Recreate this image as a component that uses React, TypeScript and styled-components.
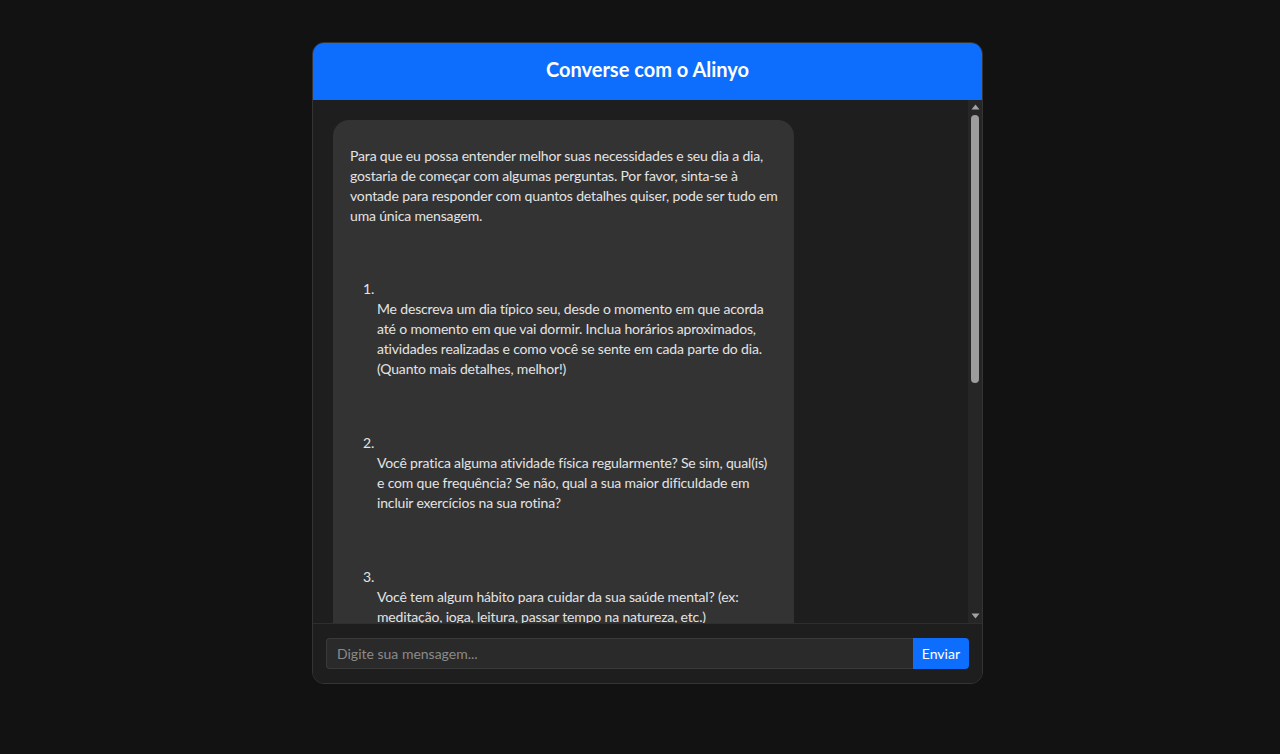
import styled, { createGlobalStyle } from "styled-components";

const GlobalStyle = createGlobalStyle`
  html, body {
    margin: 0;
    background-color: #121212;
    font-family: Lato, "Liberation Sans", sans-serif;
  }
  * {
    box-sizing: border-box;
  }
`;

const Page = styled.div`
  min-height: 754px;
  display: flex;
  justify-content: center;
  align-items: flex-start;
  padding: 42px 0 0 15px;
`;

const ChatBox = styled.div`
  width: 671px;
  height: 642px;
  display: flex;
  flex-direction: column;
  background-color: #1e1e1e;
  border: 1px solid #343434;
  border-radius: 12px;
  overflow: hidden;
`;

const Header = styled.header`
  background-color: #0d6efd;
  color: #fff;
  text-align: center;
  padding: 14px 16px 18px;
  font-size: 20px;
  line-height: 25px;
  font-weight: 700;
`;

const Body = styled.div`
  flex: 1;
  min-height: 0;
  display: flex;
`;

const Messages = styled.div`
  flex: 1;
  overflow-y: auto;
  scrollbar-width: none;
  padding: 20px;
  display: flex;
  flex-direction: column;
  gap: 14px;

  &::-webkit-scrollbar {
    display: none;
  }
`;

const ScrollRail = styled.div`
  width: 14px;
  display: flex;
  flex-direction: column;
  align-items: center;
  background-color: #262626;
`;

const RailButton = styled.div`
  height: 14px;
  width: 14px;
  display: flex;
  align-items: center;
  justify-content: center;
`;

const Thumb = styled.div`
  width: 8px;
  margin-top: 1px;
  border-radius: 4px;
  background-color: #9d9d9d;
`;

const RailSpacer = styled.div`
  flex: 1;
`;

const Bubble = styled.div<{ $user?: boolean }>`
  align-self: ${(p) => (p.$user ? "flex-end" : "flex-start")};
  max-width: 75%;
  background-color: ${(p) => (p.$user ? "#0d6efd" : "#333333")};
  color: #e3e3e3;
  border-radius: 16px;
  padding: 12px 14px 10px 17px;
  font-size: 14px;
  line-height: 20px;
  letter-spacing: -0.16px;
`;

const Paragraph = styled.p`
  margin: 14px 0;
`;

const List = styled.ol`
  list-style: none;
  margin: 53px 0 40px;
  padding: 0 3px 0 27px;
  display: flex;
  flex-direction: column;
  gap: 54px;
`;

const Item = styled.li`
  margin: 0;
`;

const Number = styled.div`
  margin-left: -14px;
`;

const Composer = styled.form`
  display: flex;
  padding: 14px 13px;
  border-top: 1px solid #2e2e2e;
  background-color: #1e1e1e;
`;

const Input = styled.input`
  flex: 1;
  height: 31px;
  padding: 0 10px;
  background-color: #2a2a2a;
  border: 1px solid #3a3a3a;
  border-right: none;
  border-radius: 4px 0 0 4px;
  color: #e3e3e3;
  font-family: inherit;
  font-size: 14px;
  outline: none;

  &::placeholder {
    color: #8a8a8a;
  }
`;

const SendButton = styled.button`
  height: 31px;
  padding: 0 9px;
  background-color: #0d6efd;
  color: #fff;
  border: none;
  border-radius: 0 4px 4px 0;
  font-family: inherit;
  font-size: 14px;
  cursor: pointer;
`;

const Arrow = ({ up }: { up?: boolean }) => (
  <svg width="9" height="6" viewBox="0 0 9 6">
    <polygon
      points={up ? "0.5,5.5 4.5,0.5 8.5,5.5" : "0.5,0.5 4.5,5.5 8.5,0.5"}
      fill="#a3a3a3"
    />
  </svg>
);

const questions = [
  "Me descreva um dia típico seu, desde o momento em que acorda até o momento em que vai dormir. Inclua horários aproximados, atividades realizadas e como você se sente em cada parte do dia. (Quanto mais detalhes, melhor!)",
  "Você pratica alguma atividade física regularmente? Se sim, qual(is) e com que frequência? Se não, qual a sua maior dificuldade em incluir exercícios na sua rotina?",
  "Você tem algum hábito para cuidar da sua saúde mental? (ex: meditação, ioga, leitura, passar tempo na natureza, etc.)",
  "Como é a sua alimentação no dia a dia? Quantas refeições você costuma fazer e quais alimentos consome com mais frequência?",
  "Como você avalia a qualidade do seu sono? Quantas horas costuma dormir por noite?",
];

export default function App() {
  return (
    <>
      <GlobalStyle />
      <Page>
        <ChatBox>
          <Header>Converse com o Alinyo</Header>
          <Body>
            <Messages>
              <Bubble>
                <Paragraph>
                  Para que eu possa entender melhor suas necessidades e seu dia
                  a dia, gostaria de começar com algumas perguntas. Por favor,
                  sinta-se à vontade para responder com quantos detalhes quiser,
                  pode ser tudo em uma única mensagem.
                </Paragraph>
                <List>
                  {questions.map((q, i) => (
                    <Item key={i}>
                      <Number>{i + 1}.</Number>
                      {q}
                    </Item>
                  ))}
                </List>
                <Paragraph>
                  Fique à vontade para compartilhar qualquer outra informação
                  que considere importante!
                </Paragraph>
              </Bubble>
            </Messages>
            <ScrollRail>
              <RailButton>
                <Arrow up />
              </RailButton>
              <Thumb style={{ height: 268 }} />
              <RailSpacer />
              <RailButton>
                <Arrow />
              </RailButton>
            </ScrollRail>
          </Body>
          <Composer onSubmit={(e) => e.preventDefault()}>
            <Input type="text" placeholder="Digite sua mensagem..." />
            <SendButton type="submit">Enviar</SendButton>
          </Composer>
        </ChatBox>
      </Page>
    </>
  );
}
